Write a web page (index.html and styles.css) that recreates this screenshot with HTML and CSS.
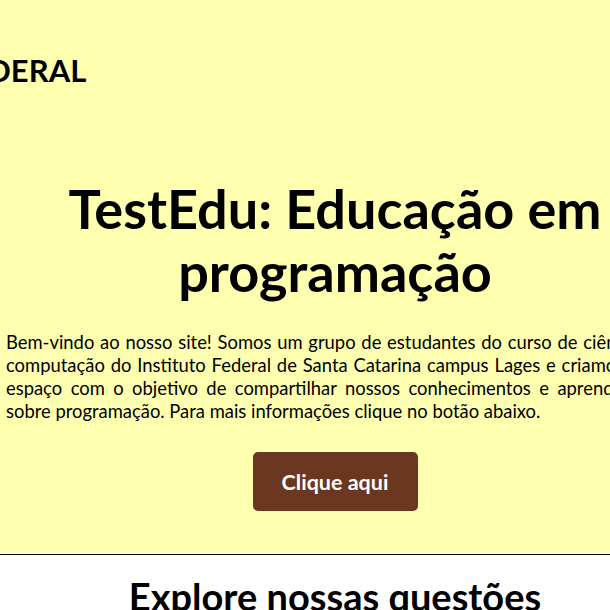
FILE: index.html
```html
<!DOCTYPE html>
<html lang="pt-BR">
<head>
<meta charset="utf-8">
<title>TestEdu</title>
<link rel="stylesheet" href="styles.css">
</head>
<body>
<div class="page">
  <section class="hero">
    <header class="topbar">
      <div class="brand">INSTITUTO FEDERAL</div>
    </header>
    <div class="hero-body">
      <h1 class="hero-title">TestEdu: Educação em programação</h1>
      <p class="hero-text">Bem-vindo ao nosso site! Somos um grupo de estudantes do curso de ciência da computação do Instituto Federal de Santa Catarina campus Lages e criamos este espaço com o objetivo de compartilhar nossos conhecimentos e aprendizados sobre programação. Para mais informações clique no botão abaixo.</p>
      <a class="btn" href="#">Clique aqui</a>
    </div>
  </section>
  <section class="explore">
    <h2 class="explore-title">Explore nossas questões</h2>
  </section>
</div>
</body>
</html>
```
FILE: styles.css
```css
html, body {
  margin: 0;
  padding: 0;
}
body {
  font-family: "Lato", "Open Sans", sans-serif;
  color: #000;
  background: #fff;
}
.page {
  width: 670px;
}
.hero {
  background: #ffffb0;
  border-bottom: 1px solid #000;
  height: 555px;
  box-sizing: border-box;
}
.topbar {
  height: 140px;
  padding-top: 51px;
  box-sizing: border-box;
}
.brand {
  font-weight: 700;
  font-size: 31px;
  line-height: 38px;
  white-space: nowrap;
  margin-left: -218px;
}
.hero-body {
  display: flex;
  flex-direction: column;
  align-items: center;
  padding: 0 6px;
}
.hero-title {
  margin: 37px 0 0;
  font-size: 54px;
  line-height: 63px;
  font-weight: 700;
  text-align: center;
  width: 580px;
}
.hero-text {
  margin: 28px 0 0;
  font-size: 18.4px;
  line-height: 23px;
  text-align: justify;
  align-self: stretch;
}
.btn {
  margin-top: 29px;
  width: 165px;
  height: 59px;
  display: flex;
  align-items: center;
  justify-content: center;
  background: #6b3720;
  color: #fff;
  border-radius: 5px;
  font-weight: 700;
  font-size: 21.5px;
  text-decoration: none;
}
.explore {
  padding-top: 18px;
}
.explore-title {
  margin: 0;
  text-align: center;
  font-size: 38px;
  font-weight: 700;
  line-height: 46px;
}
```
